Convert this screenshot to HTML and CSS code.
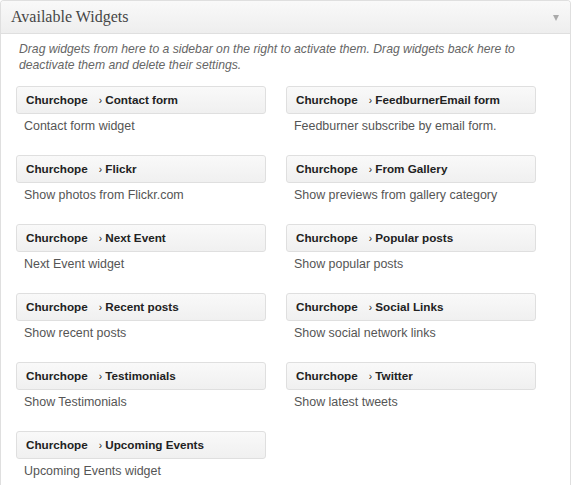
FILE: index.html
```html
<!DOCTYPE html>
<html>
<head>
<meta charset="utf-8">
<title>Available Widgets</title>
<link rel="stylesheet" href="styles.css">
</head>
<body>
<div class="panel">
  <div class="panel-head">
    <h3 class="panel-title">Available Widgets</h3>
    <span class="toggle"></span>
  </div>
  <p class="intro">Drag widgets from here to a sidebar on the right to activate them. Drag widgets back here to deactivate them and delete their settings.</p>
  <div class="widgets">
    <div class="widget"><div class="widget-top"><span class="brand">Churchope</span><span class="sep">›</span> Contact form</div><div class="widget-desc">Contact form widget</div></div>
    <div class="widget"><div class="widget-top"><span class="brand">Churchope</span><span class="sep">›</span> FeedburnerEmail form</div><div class="widget-desc">Feedburner subscribe by email form.</div></div>
    <div class="widget"><div class="widget-top"><span class="brand">Churchope</span><span class="sep">›</span> Flickr</div><div class="widget-desc">Show photos from Flickr.com</div></div>
    <div class="widget"><div class="widget-top"><span class="brand">Churchope</span><span class="sep">›</span> From Gallery</div><div class="widget-desc">Show previews from gallery category</div></div>
    <div class="widget"><div class="widget-top"><span class="brand">Churchope</span><span class="sep">›</span> Next Event</div><div class="widget-desc">Next Event widget</div></div>
    <div class="widget"><div class="widget-top"><span class="brand">Churchope</span><span class="sep">›</span> Popular posts</div><div class="widget-desc">Show popular posts</div></div>
    <div class="widget"><div class="widget-top"><span class="brand">Churchope</span><span class="sep">›</span> Recent posts</div><div class="widget-desc">Show recent posts</div></div>
    <div class="widget"><div class="widget-top"><span class="brand">Churchope</span><span class="sep">›</span> Social Links</div><div class="widget-desc">Show social network links</div></div>
    <div class="widget"><div class="widget-top"><span class="brand">Churchope</span><span class="sep">›</span> Testimonials</div><div class="widget-desc">Show Testimonials</div></div>
    <div class="widget"><div class="widget-top"><span class="brand">Churchope</span><span class="sep">›</span> Twitter</div><div class="widget-desc">Show latest tweets</div></div>
    <div class="widget"><div class="widget-top"><span class="brand">Churchope</span><span class="sep">›</span> Upcoming Events</div><div class="widget-desc">Upcoming Events widget</div></div>
  </div>
</div>
</body>
</html>
```

FILE: styles.css
```css
html, body {
  margin: 0;
  padding: 0;
  background: #fff;
}
body {
  font-family: "Liberation Sans", Arial, sans-serif;
  font-size: 13px;
  color: #333;
}
.panel {
  width: 571px;
  height: 520px;
  box-sizing: border-box;
  border: 1px solid #dfdfdf;
  border-bottom: none;
  border-radius: 4px 4px 0 0;
  overflow: hidden;
  background: #fff;
}
.panel-head {
  height: 32px;
  border-bottom: 1px solid #dfdfdf;
  background: linear-gradient(#f9f9f9, #eeeeee);
  display: flex;
  align-items: center;
  justify-content: space-between;
  padding: 0 11px 0 10px;
}
.panel-title {
  margin: 0;
  font-family: "Liberation Serif", Georgia, serif;
  font-weight: normal;
  font-size: 16px;
  line-height: 32px;
  color: #464646;
}
.toggle {
  width: 0;
  height: 0;
  border-left: 3.5px solid transparent;
  border-right: 3.5px solid transparent;
  border-top: 6px solid #aaa;
  margin-top: 2px;
}
.intro {
  margin: 7px 0 0;
  padding: 0 14px 0 18px;
  font-style: italic;
  font-size: 12.2px;
  line-height: 16px;
  color: #666;
}
.widgets {
  margin-top: 13px;
  padding-left: 15px;
  display: grid;
  grid-template-columns: 250px 250px;
  column-gap: 20px;
}
.widget {
  margin-bottom: 21px;
}
.widget-top {
  height: 26px;
  line-height: 26px;
  border: 1px solid #dfdfdf;
  border-radius: 3px;
  background: linear-gradient(#f9f9f9, #f0f0f0);
  padding-left: 9px;
  font-weight: bold;
  font-size: 11.7px;
  color: #222;
  white-space: nowrap;
}
.sep {
  font-weight: normal;
  font-size: 10px;
  margin-left: 11px;
}
.widget-desc {
  margin-top: 4px;
  padding-left: 8px;
  font-size: 12.45px;
  line-height: 16px;
  color: #555;
}
```
